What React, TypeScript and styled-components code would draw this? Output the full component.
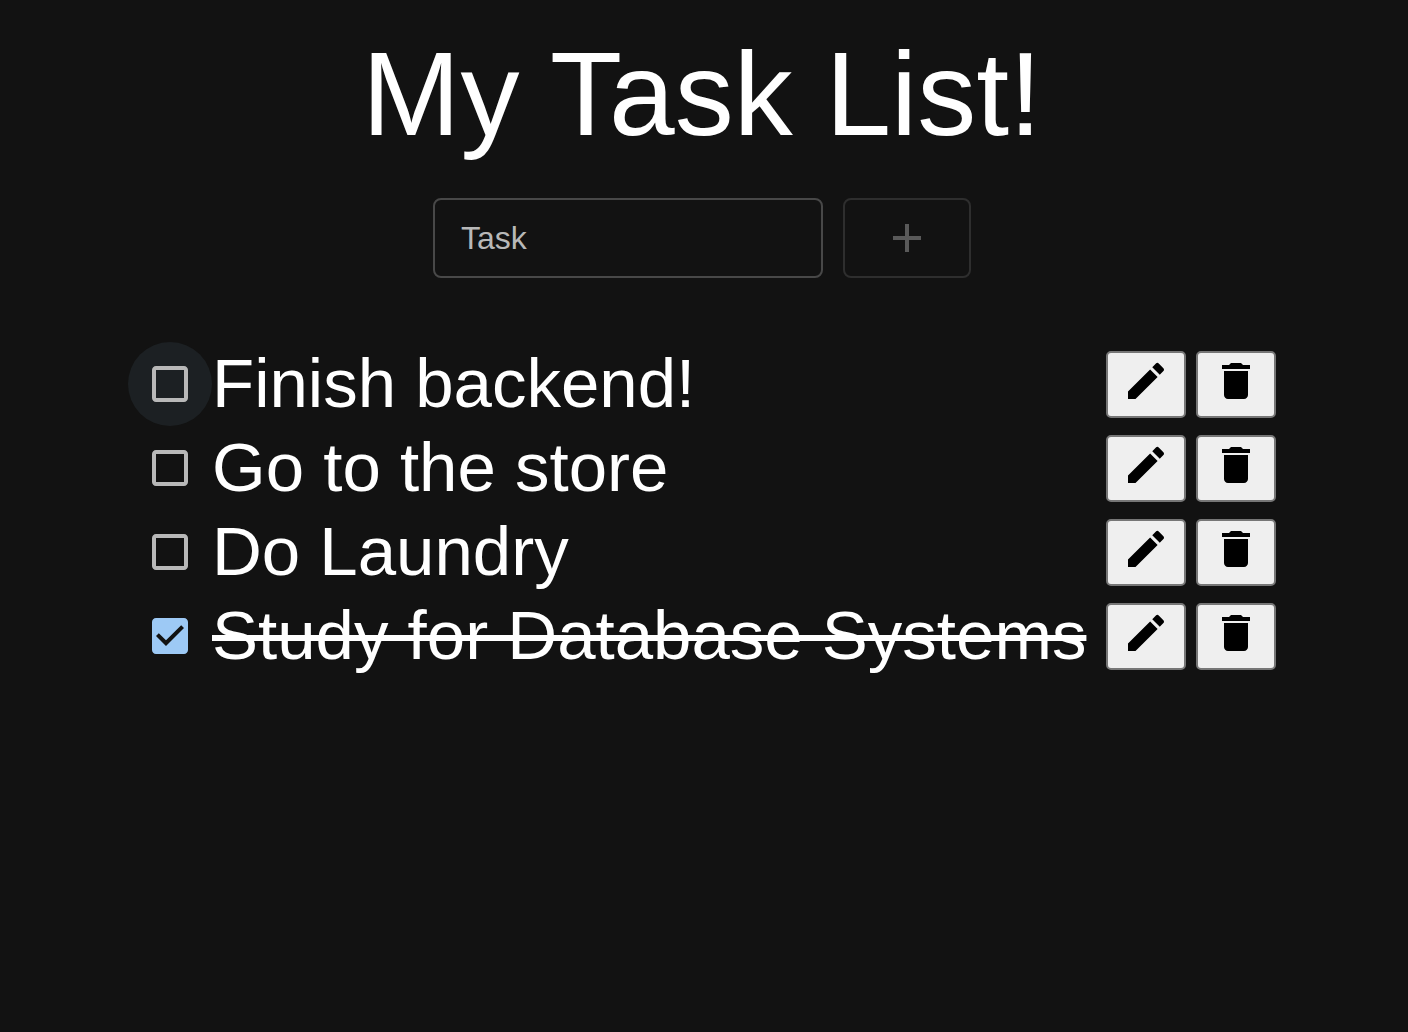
import React, { useState } from "react";
import styled, { createGlobalStyle } from "styled-components";

const GlobalStyle = createGlobalStyle`
  *, *::before, *::after { box-sizing: border-box; }
  body {
    margin: 0;
    background: #121212;
    color: #fff;
    font-family: "Liberation Sans", Helvetica, Arial, sans-serif;
  }
`;

const Page = styled.main`
  display: flex;
  flex-direction: column;
  align-items: center;
  min-height: 100vh;
  padding: 22px 4px 32px 0;
`;

const Title = styled.h1`
  margin: 0;
  font-size: 118px;
  font-weight: 400;
  line-height: 144px;
  text-align: center;
`;

const AddForm = styled.form`
  display: flex;
  gap: 20px;
  margin-top: 32px;
`;

const TaskInput = styled.input`
  width: 390px;
  height: 80px;
  padding: 0 26px;
  border: 2px solid #484848;
  border-radius: 8px;
  background: transparent;
  color: #fff;
  font: inherit;
  font-size: 32px;
  outline: none;

  &::placeholder {
    color: #b8b8b8;
    opacity: 1;
  }
`;

const AddButton = styled.button`
  display: flex;
  align-items: center;
  justify-content: center;
  width: 128px;
  height: 80px;
  padding: 0;
  border: 2px solid ${(p) => (p.disabled ? "#2e2e2e" : "#4b6579")};
  border-radius: 8px;
  background: transparent;
  color: ${(p) => (p.disabled ? "#595959" : "#90caf9")};
`;

const List = styled.ul`
  width: 100%;
  max-width: 1148px;
  margin: 64px 0 0;
  padding: 0;
  list-style: none;
`;

const Row = styled.li`
  display: flex;
  align-items: center;
  min-height: 84px;
`;

const CheckCell = styled.span<{ $active: boolean; $done: boolean }>`
  display: grid;
  flex: none;
  place-items: center;
  width: 84px;
  height: 84px;
  border-radius: 50%;
  background: ${(p) => (p.$active ? "#1c2023" : "transparent")};
  color: ${(p) => (p.$done ? "#9dc9f5" : "#b8b8b8")};

  > * {
    grid-area: 1 / 1;
  }

  svg {
    pointer-events: none;
  }
`;

const Check = styled.input`
  appearance: none;
  width: 84px;
  height: 84px;
  margin: 0;
  border-radius: 50%;
  outline: none;
  cursor: pointer;
`;

const TaskName = styled.label<{ $done: boolean }>`
  font-size: 69px;
  line-height: 84px;
  text-decoration-line: ${(p) => (p.$done ? "line-through" : "none")};
  text-decoration-thickness: 6px;
`;

const Actions = styled.div`
  display: flex;
  flex: none;
  gap: 10px;
  margin-left: auto;
`;

const ActionButton = styled.button`
  display: flex;
  justify-content: center;
  width: 80px;
  height: 67px;
  padding: 4px 0 0;
  border: 2px solid #767676;
  border-radius: 5px;
  background: #efefef;
  color: #000;
`;

const paths = {
  add: "M19 13h-6v6h-2v-6H5v-2h6V5h2v6h6v2z",
  box: "M19 5v14H5V5h14m0-2H5c-1.1 0-2 .9-2 2v14c0 1.1.9 2 2 2h14c1.1 0 2-.9 2-2V5c0-1.1-.9-2-2-2z",
  checked:
    "M19 3H5c-1.11 0-2 .9-2 2v14c0 1.1.89 2 2 2h14c1.11 0 2-.9 2-2V5c0-1.1-.89-2-2-2zm-9 14l-5-5 1.41-1.41L10 14.17l7.59-7.59L19 8l-9 9z",
  edit: "M3 17.25V21h3.75L17.81 9.94l-3.75-3.75L3 17.25zM20.71 7.04c.39-.39.39-1.02 0-1.41l-2.34-2.34a.9959.9959 0 0 0-1.41 0l-1.83 1.83 3.75 3.75 1.83-1.83z",
  trash: "M6 19c0 1.1.9 2 2 2h8c1.1 0 2-.9 2-2V7H6v12zM19 4h-3.5l-1-1h-5l-1 1H5v2h14V4z",
};

function Icon({ name }: { name: keyof typeof paths }) {
  return (
    <svg width="48" height="48" viewBox="0 0 24 24" fill="currentColor" aria-hidden="true">
      <path d={paths[name]} />
    </svg>
  );
}

interface Task {
  id: number;
  name: string;
  done: boolean;
}

const initialTasks: Task[] = [
  { id: 1, name: "Finish backend!", done: false },
  { id: 2, name: "Go to the store", done: false },
  { id: 3, name: "Do Laundry", done: false },
  { id: 4, name: "Study for Database Systems", done: true },
];

export default function App() {
  const [tasks, setTasks] = useState(initialTasks);
  const [draft, setDraft] = useState("");
  const [activeId, setActiveId] = useState(1);

  const addTask = (event: React.FormEvent) => {
    event.preventDefault();
    if (!draft.trim()) return;
    setTasks([...tasks, { id: Date.now(), name: draft.trim(), done: false }]);
    setDraft("");
  };

  const toggle = (id: number) => {
    setActiveId(id);
    setTasks(tasks.map((t) => (t.id === id ? { ...t, done: !t.done } : t)));
  };

  const edit = (task: Task) => {
    setDraft(task.name);
    setTasks(tasks.filter((t) => t.id !== task.id));
  };

  return (
    <>
      <GlobalStyle />
      <Page>
        <Title>My Task List!</Title>
        <AddForm onSubmit={addTask}>
          <TaskInput
            aria-label="Task"
            placeholder="Task"
            value={draft}
            onChange={(e) => setDraft(e.target.value)}
          />
          <AddButton type="submit" aria-label="Add task" disabled={!draft.trim()}>
            <Icon name="add" />
          </AddButton>
        </AddForm>
        <List>
          {tasks.map((task) => (
            <Row key={task.id}>
              <CheckCell $active={task.id === activeId} $done={task.done}>
                <Check
                  type="checkbox"
                  id={`task-${task.id}`}
                  checked={task.done}
                  onChange={() => toggle(task.id)}
                />
                <Icon name={task.done ? "checked" : "box"} />
              </CheckCell>
              <TaskName htmlFor={`task-${task.id}`} $done={task.done}>
                {task.name}
              </TaskName>
              <Actions>
                <ActionButton type="button" aria-label={`Edit ${task.name}`} onClick={() => edit(task)}>
                  <Icon name="edit" />
                </ActionButton>
                <ActionButton
                  type="button"
                  aria-label={`Delete ${task.name}`}
                  onClick={() => setTasks(tasks.filter((t) => t.id !== task.id))}
                >
                  <Icon name="trash" />
                </ActionButton>
              </Actions>
            </Row>
          ))}
        </List>
      </Page>
    </>
  );
}
